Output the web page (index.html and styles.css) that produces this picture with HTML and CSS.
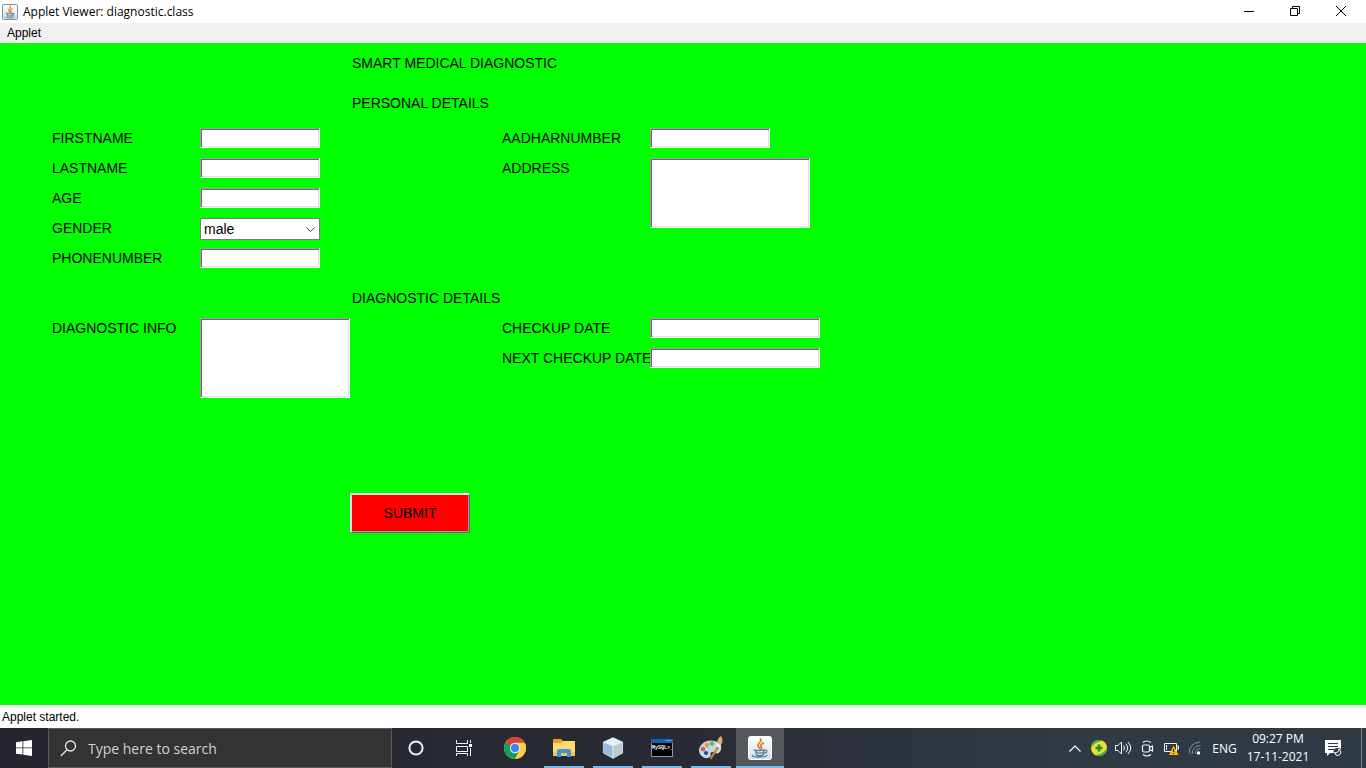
FILE: index.html
```html
<!DOCTYPE html>
<html lang="en">
<head>
<meta charset="utf-8">
<title>Applet Viewer: diagnostic.class</title>
<link rel="stylesheet" href="styles.css">
</head>
<body>
<svg class="defs" aria-hidden="true">
  <defs>
    <linearGradient id="tile" x1="0" y1="0" x2="0" y2="1"><stop offset="0" stop-color="#ffffff"/><stop offset="1" stop-color="#d9dde0"/></linearGradient>
    <symbol id="java" viewBox="0 0 24 24">
      <path d="M12.500 3c2 3-3.500 4.500-2.500 7 .4 1.200 1.500 1.800 1.800 2.800M15.500 7c-3 1.500-3.500 2.500-2.200 4 .7.900.3 1.600-.4 2.200" fill="none" stroke="#e8762c" stroke-width="1.700" stroke-linecap="round"/>
      <path d="M6 13.800c2 .9 8 .9 10.500 0M7.500 14.500l.9 4.300c1.700.8 5 .8 6.700 0l.9-4.300M16.300 14.200c3.600-.8 3.500 2.700-.6 3.200M8.200 16.700c2 .5 5 .5 7 0M4.500 19.500c-.8 1.900 12.500 2.200 14.500-.2" fill="none" stroke="#5382a1" stroke-width="1.300" stroke-linecap="round"/>
    </symbol>
  </defs>
</svg>
<div class="desktop">
  <header class="titlebar">
    <svg class="app-icon" viewBox="0 0 16 16"><rect x=".5" y=".5" width="15" height="15" rx="1" fill="url(#tile)" stroke="#7893ac"/><use href="#java" x="0" y="0" width="16" height="16"/></svg>
    <span class="window-title">Applet Viewer: diagnostic.class</span>
    <div class="window-buttons">
      <button class="window-button" aria-label="Minimize"><svg viewBox="0 0 10 10"><path d="M0 5.500h10"/></svg></button>
      <button class="window-button" aria-label="Restore"><svg viewBox="0 0 10 10"><path d="M.5 2.500h7v7h-7zM2.500 2.500v-2h7v7h-2"/></svg></button>
      <button class="window-button" aria-label="Close"><svg viewBox="0 0 10 10"><path d="M0 0l10 10M10 0L0 10"/></svg></button>
    </div>
  </header>
  <nav class="menubar"><button class="menu">Applet</button></nav>
  <main class="applet">
    <form class="form">
      <h1 class="heading">SMART MEDICAL DIAGNOSTIC</h1>
      <h2 class="heading heading-personal">PERSONAL DETAILS</h2>
      <div class="columns columns-personal">
        <div class="fields">
          <label class="label" for="first">FIRSTNAME</label><input class="field" id="first" type="text">
          <label class="label" for="last">LASTNAME</label><input class="field" id="last" type="text">
          <label class="label" for="age">AGE</label><input class="field" id="age" type="text">
          <label class="label" for="gender">GENDER</label>
          <div class="choice">
            <select class="select" id="gender"><option>male</option><option>female</option></select>
            <svg class="choice-arrow" viewBox="0 0 9 5" aria-hidden="true"><path d="M.5.5l4 4 4-4"/></svg>
          </div>
          <label class="label" for="phone">PHONENUMBER</label><input class="field" id="phone" type="text">
        </div>
        <div class="fields">
          <label class="label" for="aadhar">AADHARNUMBER</label><input class="field" id="aadhar" type="text">
          <label class="label" for="address">ADDRESS</label><textarea class="field area-address" id="address"></textarea>
        </div>
      </div>
      <h2 class="heading heading-diagnostic">DIAGNOSTIC DETAILS</h2>
      <div class="columns">
        <div class="fields">
          <label class="label" for="info">DIAGNOSTIC INFO</label><textarea class="field area-info" id="info"></textarea>
        </div>
        <div class="fields">
          <label class="label" for="checkup">CHECKUP DATE</label><input class="field field-date" id="checkup" type="text">
          <label class="label" for="next">NEXT CHECKUP DATE</label><input class="field field-date" id="next" type="text">
        </div>
      </div>
      <button class="submit" type="button">SUBMIT</button>
    </form>
  </main>
  <div class="status">Applet started.</div>
  <footer class="taskbar">
    <button class="task" aria-label="Start"><svg width="16" height="16" viewBox="0 0 16 16" fill="#fff"><path d="M0 2.200l6.500-.9v6.200H0zM7.300 1.200L16 0v7.500H7.300zM0 8.300h6.500v6.300L0 13.700zM7.300 8.300H16V16l-8.700-1.200z"/></svg></button>
    <label class="search">
      <svg width="17" height="17" viewBox="0 0 17 17" fill="none" stroke="#e6e6e6" stroke-width="1.300"><circle cx="10.500" cy="6" r="5"/><path d="M7 9.700L.8 16"/></svg>
      <input class="search-input" type="text" placeholder="Type here to search" aria-label="Search">
    </label>
    <button class="task" aria-label="Cortana"><svg width="16" height="16" viewBox="0 0 16 16"><circle cx="8" cy="8" r="6.600" fill="none" stroke="#f2f2f2" stroke-width="2"/></svg></button>
    <button class="task" aria-label="Task view"><svg width="17" height="16" viewBox="0 0 17 16" fill="none" stroke="#f2f2f2"><path d="M.5 0v3.500h11V0M.5 6.500h11v5H.5zM.5 16v-2.500h11V16M14.500 0v3M14.500 8v8"/><path d="M13 4h3v3h-3z" fill="#fff" stroke="none"/></svg></button>
    <div class="apps">
      <button class="task" aria-label="Chrome"><svg width="22" height="22" viewBox="0 0 22 22"><circle cx="11" cy="11" r="11" fill="#ffcd40"/><path d="M11 11L1.500 5.500a11 11 0 0 1 19 0z" fill="#db4437"/><path d="M1.500 5.500A11 11 0 0 0 11 22l4.500-8.500L11 11z" fill="#0f9d58"/><path d="M11 5.800h9.700A11 11 0 0 1 11 22l4.700-8.300z" fill="#ffcd40"/><circle cx="11" cy="11" r="5.200" fill="#f1f1f1"/><circle cx="11" cy="11" r="4.200" fill="#4285f4"/></svg></button>
      <button class="task open" aria-label="File Explorer"><svg width="22" height="18" viewBox="0 0 22 18"><path d="M0 1q0-1 1-1h7l2 2h11q1 0 1 1v13H0z" fill="#e9a21b"/><path d="M0 4h8l2-2h12v15H0z" fill="#ffd96c"/><path d="M0 13h22v4H0z" fill="#f4c64f"/><path d="M4 18v-6q0-2 2-2h10q2 0 2 2v6h-4v-4H8v4z" fill="#3c94dc"/></svg></button>
      <button class="task open" aria-label="NetBeans"><svg width="22" height="22" viewBox="0 0 22 22" stroke="#1e3763" stroke-width=".7" stroke-linejoin="round"><path d="M11 .7l9.600 4.500V16L11 21.300 1.400 16V5.200z" fill="#a7c8e5"/><path d="M11 .7l9.600 4.500L11 9 1.400 5.200z" fill="#e6eff4" stroke="#f8ffff"/><path d="M1.400 5.200L11 9v12.300L1.400 16z" fill="#94bbdf" stroke="#d9edf9"/><path d="M20.600 5.200L11 9v12.300l9.600-5.300z" fill="#bccbc9" stroke="#e4eff2"/></svg></button>
      <button class="task open" aria-label="MySQL"><svg width="22" height="18" viewBox="0 0 22 18"><path d="M0 0h22v18H0z" fill="#8d949c"/><path d="M0 0h22v4H0z" fill="#1462b5"/><path d="M1 4h20v13H1z"/><path d="M15 1.500h1.500M17.500 1.500H19" stroke="#8fc2f0"/><path d="M19.500 1.500H21" stroke="#f26b4e"/><text x="1" y="10" class="console-text">MySQL&gt;_</text></svg></button>
      <button class="task open" aria-label="Paint"><svg width="24" height="24" viewBox="0 0 24 24"><path d="M12 5C4 5-1 11 1 17c2 5 8 6 10 3 1-2-1-3 1-4 3-2 6 4 9-1 3-6-3-10-9-10z" fill="#bcd8ec" stroke="#e2f4ff" stroke-width=".8"/><circle cx="4" cy="13" r="2.200" fill="#e35343"/><circle cx="8" cy="9" r="2.200" fill="#f1952c"/><circle cx="13" cy="7.500" r="2.200" fill="#64b947"/><circle cx="7" cy="17" r="2" fill="#31495e"/><path d="M21 8l-9 14" stroke="#d8812c" stroke-width="2.300" stroke-linecap="round"/><path d="M18 7q0-4 4-7 3 4 0 9z" fill="#dfad72"/><path d="M18 7l4 2-1.500 3-3.200-2z" fill="#eef3f5"/></svg></button>
      <button class="task open active" aria-label="Applet Viewer"><svg width="24" height="24" viewBox="0 0 24 24"><rect x=".5" y=".5" width="23" height="23" rx="2" fill="url(#tile)" stroke="#fff"/><use href="#java" width="24" height="24"/></svg></button>
    </div>
    <div class="tray">
      <button class="tray-item" aria-label="Show hidden icons"><svg width="12" height="7" viewBox="0 0 12 7" fill="none" stroke="#fff" stroke-width="1.200"><path d="M.5 6.500L6 1l5.500 5.500"/></svg></button>
      <button class="tray-item" aria-label="Antivirus"><svg width="16" height="16" viewBox="0 0 16 16"><circle cx="8" cy="8" r="8" fill="#f5d936"/><path d="M0 8a8 8 0 0 1 12-7Q4 1 0 8zM16 8a8 8 0 0 1-12 7q8 0 12-7z" fill="#31b44a"/><path d="M8 4.500v7M4.500 8h7" stroke="#16933b" stroke-width="2.500"/></svg></button>
      <button class="tray-item" aria-label="Volume"><svg width="17" height="14" viewBox="0 0 17 14" fill="none" stroke="#f5f5f5"><path d="M.5 4.500H3L6.500 1v12L3 9.500H.5zM8.500 4.500q2 2.500 0 5M10.700 2.700q4 4.300 0 8.600M13 1q5.500 6 0 12"/></svg></button>
      <button class="tray-item" aria-label="Meet Now"><svg width="13" height="17" viewBox="0 0 13 17" fill="none" stroke="#f5f5f5" stroke-width="1.200"><rect x="1.500" y="5" width="7" height="7" rx="1.500"/><path d="M8.500 7.500l3-1.500v5l-3-1.500M2 2.500q3.500-3 8 0M2 14.500q3.500 3 8 0"/></svg></button>
      <button class="tray-item" aria-label="Battery"><svg width="17" height="14" viewBox="0 0 17 14"><path d="M1.500 2.500h12v8h-12zM14 5h1.500v3H14M3.500 4v5" fill="none" stroke="#f5f5f5"/><path d="M10.500 4.500l5 9.500H6z" fill="#ffb51a"/><path d="M10.500 8v3M10.500 12v1" stroke="#222"/></svg></button>
      <button class="tray-item" aria-label="Network"><svg width="14" height="14" viewBox="0 0 14 14" fill="none" stroke="#88919a"><path d="M1 12.500Q1.500 2 12 1M4 13q.5-8 8.500-8.500M7 13q.3-5 5.500-5.500"/><circle cx="10.500" cy="12" r="1.700" fill="#fff" stroke="none"/></svg></button>
      <button class="language">ENG</button>
      <button class="clock"><span>09:27 PM</span><span>17-11-2021</span></button>
      <button class="notifications" aria-label="Notifications"><svg width="17" height="17" viewBox="0 0 17 17"><path d="M0 0h16v13H5l-3 3v-3H0z" fill="#fff"/><path d="M3 3.500h10M3 6.500h10M3 9.500h6" stroke="#303a45"/><circle cx="12.500" cy="12" r="4" fill="#303a45"/><path d="M9.500 12.500q4 1 4.500-3.500 4 4.500-1 6.500-2.500.5-3.500-3" fill="none" stroke="#fff"/></svg></button>
    </div>
  </footer>
</div>
</body>
</html>
```
FILE: styles.css
```css
* { box-sizing: border-box; }
body { margin: 0; font-family: "Liberation Sans", Arial, sans-serif; color: #000; }
button { margin: 0; padding: 0; border: 0; background: none; color: inherit; font: inherit; }
.defs { position: absolute; width: 0; height: 0; }
.desktop { display: flex; flex-direction: column; min-height: 100vh; }

.titlebar { display: flex; align-items: center; height: 23px; padding-left: 2px; background: #fff; }
.app-icon { width: 16px; height: 16px; margin-right: 5px; }
.window-title { font: 12px/23px "Open Sans", "Noto Sans", sans-serif; }
.window-buttons { display: flex; align-self: stretch; margin-left: auto; padding-right: 2px; }
.window-button { display: flex; align-items: center; justify-content: center; width: 46px; padding-bottom: 2px; }
.window-button svg { width: 10px; height: 10px; overflow: visible; fill: none; stroke: #000; }
.menubar { display: flex; align-items: center; height: 20px; padding-left: 7px; background: #f0f0f0; font-size: 12px; }

.applet { flex: 1; background: #00ff00; font-size: 14px; line-height: 20px; }
.form { display: flex; flex-direction: column; align-items: flex-start; padding: 10px 50px; }
.heading { margin: 0 0 0 300px; padding-left: 2px; font-size: 14px; font-weight: 400; line-height: 20px; white-space: nowrap; }
.heading-personal { margin-top: 20px; margin-bottom: 15px; }
.heading-diagnostic { margin-top: 20px; margin-bottom: 10px; }
.columns { display: grid; grid-template-columns: 450px auto; align-items: start; }
.fields { display: grid; grid-template-columns: 150px auto; grid-auto-rows: minmax(20px, auto); gap: 10px 0; justify-content: start; }
.columns-personal .fields { grid-auto-rows: 20px; }
.label { padding-left: 2px; white-space: nowrap; }
.field { display: block; width: 120px; height: 20px; margin: 0; padding: 0 2px; border: 1px solid; border-color: #a0a0a0 #fff #fff #a0a0a0; border-radius: 0; outline: 0; background: #fff; box-shadow: inset 1px 1px #696969, inset -1px -1px #e3e3e3; font: inherit; resize: none; }
.field-date { width: 170px; }
.area-address { width: 160px; height: 70px; }
.area-info { width: 150px; height: 80px; }
.choice { position: relative; width: 120px; height: 22px; }
.select { appearance: none; width: 100%; height: 100%; padding: 0 3px; border: 1px solid #7a7a7a; border-radius: 0; background: #fff; color: #000; font: inherit; }
.choice-arrow { position: absolute; top: 9px; right: 5px; width: 9px; height: 5px; fill: none; stroke: #444; pointer-events: none; }
.submit { width: 120px; height: 40px; margin: 95px 0 0 300px; border: 1px solid; border-color: #fff #696969 #696969 #fff; background: #ff0000; box-shadow: inset 1px 1px #e3e3e3, inset -1px -1px #a0a0a0; }
.status { height: 23px; padding-left: 2px; background: #fff; font-size: 12px; line-height: 24px; }

.taskbar { display: flex; height: 40px; background: linear-gradient(90deg, #252630, #292b34 50%, #303a45 80%, #2e3944); color: #fff; font-family: "Open Sans", "Noto Sans", sans-serif; }
.task { display: flex; align-items: center; justify-content: center; flex: none; width: 48px; height: 40px; }
.search { display: flex; align-items: center; gap: 11px; width: 344px; padding-left: 11px; border: 1px solid #5b5b5c; background: #333; }
.search-input { flex: 1; min-width: 0; padding: 1px 0 0; border: 0; outline: 0; background: none; color: #fff; font: 14px/20px "Open Sans", "Noto Sans", sans-serif; }
.search-input::placeholder { color: #d2d2d2; opacity: 1; }
.apps { display: flex; gap: 1px; margin-left: 3px; }
.open { background: linear-gradient(#76b9ed, #76b9ed) center bottom / 40px 2px no-repeat; }
.active { background-color: #54575e; background-size: 48px 2px; }
.console-text { fill: #fff; font: 700 5px "Liberation Mono", monospace; }
.tray { display: flex; align-items: center; margin-left: auto; font-size: 12px; }
.tray-item { display: flex; align-items: center; justify-content: center; width: 24px; height: 40px; }
.language { width: 33px; padding-left: 2px; font-size: 12px; }
.clock { display: flex; flex-direction: column; align-items: center; justify-content: center; width: 76px; font-size: 12px; line-height: 18px; }
.notifications { display: flex; align-items: center; justify-content: center; width: 46px; height: 40px; margin-right: 4px; padding-right: 10px; border-right: 1px solid #7b838b; }
```
